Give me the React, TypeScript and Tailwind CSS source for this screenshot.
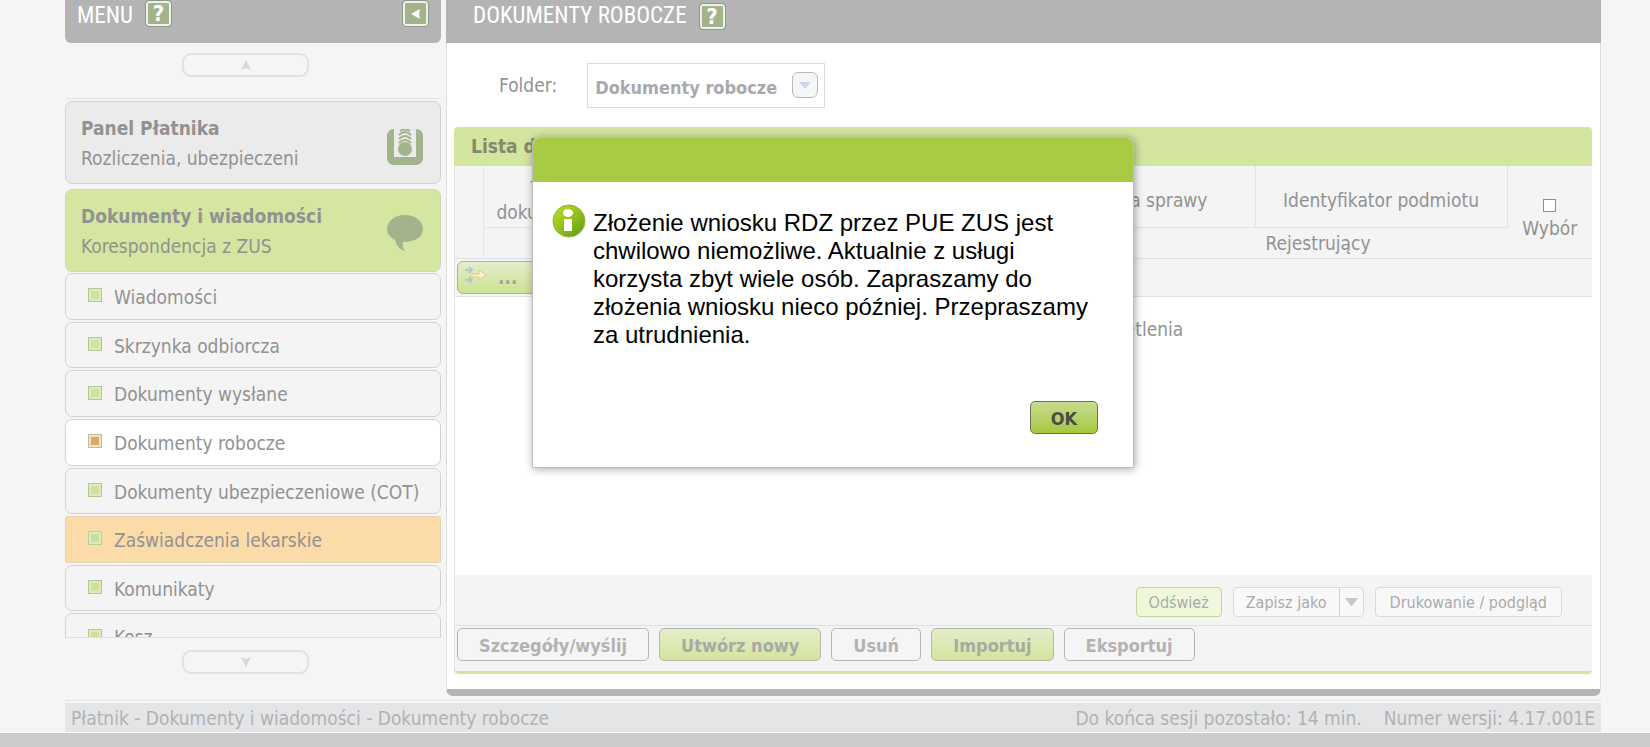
import type { ReactNode } from 'react';

const menuItems = [
  { label: 'Wiadomości', state: 'normal' },
  { label: 'Skrzynka odbiorcza', state: 'normal' },
  { label: 'Dokumenty wysłane', state: 'normal' },
  { label: 'Dokumenty robocze', state: 'active' },
  { label: 'Dokumenty ubezpieczeniowe (COT)', state: 'normal' },
  { label: 'Zaświadczenia lekarskie', state: 'hover' },
  { label: 'Komunikaty', state: 'normal' },
  { label: 'Kosz', state: 'normal' },
];

const itemStyles: Record<string, string> = {
  normal: 'rounded-[7px] border-[#d3d3d6] bg-[#f4f4f4]',
  active: 'rounded-[7px] border-[#d3d3d6] bg-white',
  hover: 'rounded-[2px] border-[#e6d3b8] bg-[#fbdca9]',
};

const bulletStyles: Record<string, string> = {
  normal: 'border-[#b4c496] bg-[#cfe29b]',
  active: 'border-[#c9bb98] bg-[#e0a56c]',
  hover: 'border-[#b9cfa0] bg-[#c5e29d]',
};

function HelpButton() {
  return (
    <button
      type="button"
      aria-label="Pomoc"
      className="flex size-[27px] items-center justify-center rounded-[4px] border border-[#8f9a86] bg-[#a3b38b] text-[22px] leading-none font-bold text-white shadow-[inset_0_0_0_2px_#eef2ea]"
    >
      ?
    </button>
  );
}

function ScrollButton({ direction }: { direction: 'up' | 'down' }) {
  return (
    <button
      type="button"
      aria-label={direction === 'up' ? 'Przewiń w górę' : 'Przewiń w dół'}
      className="flex h-6 w-[127px] items-center justify-center rounded-[9px] border-2 border-[#e2e2e2] bg-[#f5f5f5]"
    >
      <svg width="12" height="10" viewBox="0 0 12 10" fill="#d8d8d8" aria-hidden="true">
        <path d={direction === 'up' ? 'M6 0L11 10L6 8L1 10Z' : 'M6 10L11 0L6 2L1 0Z'} />
      </svg>
    </button>
  );
}

function ActionButton({ children, primary }: { children: ReactNode; primary?: boolean }) {
  return (
    <button
      type="button"
      className={
        'h-[33px] rounded-[5px] border px-[21px] pt-[2px] text-[18px] leading-none font-bold ' +
        (primary
          ? 'border-[#b5b8ae] bg-linear-to-b from-[#e4edcb] to-[#d3e59c] text-[#a8aba2]'
          : 'border-[#b5b5b5] bg-[#f5f5f5] text-[#b3b3b3]')
      }
    >
      {children}
    </button>
  );
}

function Sidebar() {
  return (
    <aside className="flex flex-col">
      <header className="flex h-[43px] items-start rounded-b-[6px] bg-[#b4b4b4] pr-3 pl-3">
        <h2 className="mr-3 font-['Roboto_Condensed',sans-serif] text-[23px] leading-8 text-white">
          MENU
        </h2>
        <HelpButton />
        <button
          type="button"
          aria-label="Zwiń menu"
          className="ml-auto flex size-[27px] items-center justify-center rounded-[4px] border border-[#8f9a86] bg-[#a3b38b] shadow-[inset_0_0_0_2px_#eef2ea]"
        >
          <svg width="9" height="10" viewBox="0 0 9 10" fill="#fff" aria-hidden="true">
            <path d="M0 5L9 0L8 5L9 10Z" />
          </svg>
        </button>
      </header>

      <div className="flex h-14 items-start justify-center border-b border-[#e3e3e3] pt-[10px] pr-[15px]">
        <ScrollButton direction="up" />
      </div>

      <nav className="mt-[2px] flex h-[537px] flex-col overflow-hidden border-b border-[#dedee2]">
        <a
          href="#panel"
          className="flex h-[83px] shrink-0 items-center justify-between rounded-[7px] border border-[#d3d3d6] bg-[#ebebeb] pr-[17px] pl-[15px]"
        >
          <span className="flex flex-col leading-[30px]">
            <strong>Panel Płatnika</strong>
            <span>Rozliczenia, ubezpieczeni</span>
          </span>
          <svg className="mt-2" width="36" height="36" viewBox="0 0 36 36" aria-hidden="true">
            <path
              d="M7 0H7V28H29V0C33 0 36 3 36 7V29C36 33 33 36 29 36H7C3 36 0 33 0 29V7C0 3 3 0 7 0Z"
              fill="#a3b38b"
            />
            <circle cx="18" cy="20" r="7" fill="#a3b38b" />
            <g fill="none" stroke="#a3b38b" strokeWidth="2">
              <path d="M12 14Q18 8 24 14" />
              <path d="M12 10Q18 4 24 10" />
              <path d="M12 6Q18 0 24 6" />
              <path d="M13 2Q18 -1 23 2" />
            </g>
          </svg>
        </a>

        <a
          href="#dokumenty"
          className="mt-[5px] flex h-[83px] shrink-0 items-center justify-between rounded-[7px] border border-[#d0dab5] bg-[#d4e69f] pr-[17px] pl-[15px]"
        >
          <span className="flex flex-col leading-[30px]">
            <strong>Dokumenty i wiadomości</strong>
            <span>Korespondencja z ZUS</span>
          </span>
          <svg className="mt-1" width="36" height="36" viewBox="0 0 36 36" aria-hidden="true">
            <path
              d="M18 0C28 0 36 6 36 14C36 22 28 27 16 27C15 30 16 33 18 36C12 34 9 30 8 25C3 22 0 19 0 14C0 6 8 0 18 0Z"
              fill="#a3b38b"
            />
          </svg>
        </a>

        <ul className="mt-px grid h-[387px] shrink-0 grid-rows-8 gap-[2px]">
          {menuItems.map((item) => (
            <li key={item.label} className="grid">
              <a href="#lista" className={'flex items-center border pt-[2px] pl-[22px] ' + itemStyles[item.state]}>
                <span
                  className={
                    'mr-3 mb-1 size-[14px] border shadow-[inset_0_0_0_2px_#dfeabf] ' + bulletStyles[item.state]
                  }
                />
                {item.label}
              </a>
            </li>
          ))}
        </ul>
      </nav>

      <div className="flex justify-center pt-3 pr-[15px]">
        <ScrollButton direction="down" />
      </div>
    </aside>
  );
}

function DocumentTable() {
  return (
    <table className="w-full border-collapse text-center">
      <thead className="bg-[#f4f4f4] leading-6">
        <tr className="h-[61px]">
          <th rowSpan={2} className="w-7 border-r border-[#e8e8e8]" />
          <th className="w-[124px] border-r border-b border-[#e3e3e3] pt-2 font-normal">
            Typ
            <br />
            dokumentu
          </th>
          <th className="border-r border-b border-[#e3e3e3]" />
          <th className="w-[250px] border-r border-b border-[#e3e3e3] pt-2 font-normal">Sygnatura sprawy</th>
          <th className="w-[252px] border-r border-b border-[#e3e3e3] pt-2 font-normal">
            Identyfikator podmiotu
          </th>
          <th rowSpan={2} className="w-[85px] pt-4 font-normal">
            <label className="flex flex-col items-center gap-1">
              <input
                type="checkbox"
                className="size-[13px] appearance-none border border-[#8e8e8e] bg-white"
              />
              Wybór
            </label>
          </th>
        </tr>
        <tr className="h-[31px]">
          <th />
          <th />
          <th colSpan={2} className="pt-px pl-[124px] font-normal">
            Rejestrujący
          </th>
        </tr>
        <tr className="h-[38px] border-y border-[#e1e1e1]">
          <td colSpan={6} className="pl-[2px] text-left">
            <button
              type="button"
              aria-label="Więcej"
              className="flex h-[33px] w-[120px] items-center rounded-[6px] border border-[#a9b78c] bg-linear-to-b from-[#e4edcb] to-[#cfe292] pl-[7px] font-bold text-[#a0a59a]"
            >
              <svg className="mr-[11px] mb-1" width="22" height="18" viewBox="0 0 22 18" fill="none" aria-hidden="true">
                <path d="M0 4H6M4 1L7 4L4 7M0 14H6M4 11L7 14L4 17" stroke="#b5c7cd" strokeWidth="2" />
                <path d="M7 8H14V4L21 9L14 14V11H7Z" fill="#f6f1d5" stroke="#e5c48f" />
              </svg>
              ...
            </button>
          </td>
        </tr>
      </thead>
      <tbody className="bg-white">
        <tr className="h-[279px]">
          <td colSpan={6} className="pt-5 pl-[22px] align-top leading-6">
            Brak dokumentów do wyświetlenia
          </td>
        </tr>
      </tbody>
    </table>
  );
}

function Toolbar() {
  return (
    <div className="rounded-b-[4px] border-b-3 border-[#d5e4a1] bg-[#f4f4f4]">
      <div className="flex h-[51px] items-center justify-end gap-[11px] border-b border-[#e0e0e0] pt-1 pr-[30px] text-[16px] text-[#aaaaaa]">
        <button type="button" className="h-[30px] rounded-[4px] border border-[#c5d49a] bg-[#f0f8dc] px-3 pt-[2px]">
          Odśwież
        </button>
        <div className="flex h-[30px] rounded-[4px] border border-[#dadada] bg-[#f8f8f8]">
          <button type="button" className="border-r border-[#d3d8c0] px-3 pt-[2px]">
            Zapisz jako
          </button>
          <button type="button" aria-label="Wybierz format" className="flex w-[23px] items-center justify-center">
            <svg width="13" height="8" viewBox="0 0 13 8" fill="#c9c9c9" aria-hidden="true">
              <path d="M0 0H13L7 8H6Z" />
            </svg>
          </button>
        </div>
        <button type="button" className="h-[30px] rounded-[4px] border border-[#dadada] bg-[#f8f8f8] px-[14px] pt-[2px]">
          Drukowanie / podgląd
        </button>
      </div>
      <div className="flex h-[45px] gap-[10px] pt-[2px] pl-[2px]">
        <ActionButton>Szczegóły/wyślij</ActionButton>
        <ActionButton primary>Utwórz nowy</ActionButton>
        <ActionButton>Usuń</ActionButton>
        <ActionButton primary>Importuj</ActionButton>
        <ActionButton>Eksportuj</ActionButton>
      </div>
    </div>
  );
}

function MessageDialog() {
  return (
    <div
      role="dialog"
      aria-modal="true"
      aria-describedby="dialog-text"
      className="absolute top-[137px] left-1/2 ml-[8px] flex min-h-[331px] w-[602px] -translate-x-1/2 flex-col rounded-t-[7px] border border-[#bdbdbd] bg-white shadow-[1px_1px_8px_rgba(0,0,0,0.35)]"
    >
      <div className="h-11 rounded-t-[6px] bg-[#a9ca45]" />
      <div className="flex gap-[7px] pt-[22px] pr-9 pl-[19px]">
        <svg className="shrink-0" width="34" height="34" viewBox="0 0 34 34" aria-hidden="true">
          <defs>
            <linearGradient id="info-fill" x1="0" y1="0" x2="1" y2="1">
              <stop offset="0" stopColor="#c3dc2b" />
              <stop offset="0.5" stopColor="#94bf1e" />
              <stop offset="1" stopColor="#5d9a14" />
            </linearGradient>
          </defs>
          <circle cx="17" cy="17" r="16" fill="url(#info-fill)" stroke="#8fb53a" />
          <ellipse cx="16" cy="9" rx="5" ry="4" fill="#fff" />
          <rect x="12" y="15" width="8" height="12" rx="1" fill="#fff" />
        </svg>
        <p
          id="dialog-text"
          className="pt-[5px] font-['Liberation_Sans',sans-serif] text-[24px] leading-7 text-black"
        >
          Złożenie wniosku RDZ przez PUE ZUS jest chwilowo niemożliwe. Aktualnie z usługi korzysta zbyt wiele osób.
          Zapraszamy do złożenia wniosku nieco później. Przepraszamy za utrudnienia.
        </p>
      </div>
      <button
        type="button"
        className="mt-auto mr-[35px] mb-[33px] h-[33px] w-[68px] self-end rounded-[5px] border border-[#6c7353] bg-linear-to-b from-[#c8db8e] to-[#a5c93c] pt-[2px] text-[18px] font-bold text-[#4a4d45]"
      >
        OK
      </button>
    </div>
  );
}

export default function App() {
  return (
    <div className="relative flex min-h-screen flex-col bg-[#f5f5f5] font-['DejaVu_Sans_Condensed','DejaVu_Sans',sans-serif] text-[19px] text-[#929292]">
      <div className="grid grid-cols-[376px_minmax(0,1fr)] gap-[5px] pr-[49px] pl-[65px]">
        <Sidebar />
        <main className="flex flex-col rounded-b-[7px] border-x border-b-7 border-x-[#dcdcdc] border-b-[#b4b4b4] bg-white">
          <header className="-mx-px flex h-[43px] items-start bg-[#b4b4b4] pl-[27px]">
            <h1 className="mr-3 font-['Roboto_Condensed',sans-serif] text-[23px] leading-8 text-white">
              DOKUMENTY ROBOCZE
            </h1>
            <div className="pt-[3px]">
              <HelpButton />
            </div>
          </header>

          <div className="flex h-[84px] items-center pl-[52px]">
            <span id="folder-label">Folder:</span>
            <button
              type="button"
              aria-labelledby="folder-label folder-value"
              className="ml-[30px] flex h-[45px] w-[238px] items-center justify-between border border-[#dadadd] bg-white pr-[6px] pl-[7px] text-[18px] font-bold text-[#a8a8ae]"
            >
              <span id="folder-value" className="pt-1">
                Dokumenty robocze
              </span>
              <span className="flex size-[26px] items-center justify-center rounded-[6px] border border-[#b9b9bd] bg-[#f6f6f8]">
                <svg width="12" height="7" viewBox="0 0 12 7" fill="#cdd6ea" aria-hidden="true">
                  <path d="M0 0H12L6 7Z" />
                </svg>
              </span>
            </button>
          </div>

          <section className="mr-2 mb-[15px] ml-[7px]">
            <h2 className="flex h-[39px] items-center rounded-t-[4px] bg-[#d4e5a0] pl-[17px] font-bold text-[#85886f]">
              Lista dokumentów
            </h2>
            <div className="border-l border-[#e3e3e3]">
              <DocumentTable />
              <Toolbar />
            </div>
          </section>
        </main>
      </div>

      <footer className="mt-1 mr-[49px] ml-[65px] border-t border-[#e6e6e6] pt-[2px]">
        <div className="flex h-[29px] items-center bg-[#e4e5e6] px-[6px] pt-[2px] text-[#b2b2b2]">
          <span>Płatnik - Dokumenty i wiadomości - Dokumenty robocze</span>
          <span className="ml-auto">Do końca sesji pozostało: 14 min.</span>
          <span className="ml-[22px]">Numer wersji: 4.17.001E</span>
        </div>
      </footer>
      <div className="min-h-[15px] flex-1 border-t border-white bg-[#cccccc]" />

      <MessageDialog />
    </div>
  );
}
